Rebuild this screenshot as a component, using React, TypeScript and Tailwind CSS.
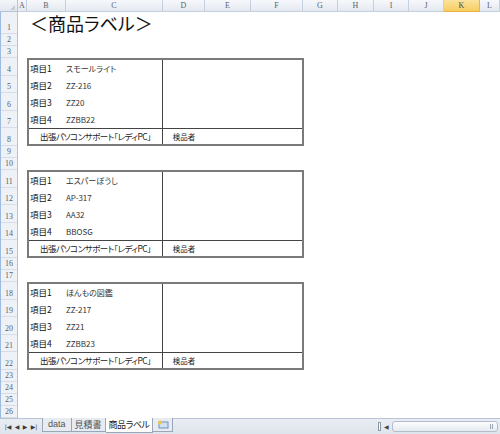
import React from 'react';

// 列ヘッダーの幅 (px)
const columnas: [string, number][] = [
  ['A', 9], ['B', 39], ['C', 97], ['D', 42], ['E', 46], ['F', 52],
  ['G', 35], ['H', 36], ['I', 35], ['J', 35], ['K', 36], ['L', 20],
];

// 行の高さ
const filas: [number, number][] = [
  [1, 22], [2, 12], [3, 12],
  [4, 17.6], [5, 17.6], [6, 17.6], [7, 17.6], [8, 17.6],
  [9, 12], [10, 12],
  [11, 17.6], [12, 17.6], [13, 17.6], [14, 17.6], [15, 17.6],
  [16, 12], [17, 12],
  [18, 17.6], [19, 17.6], [20, 17.6], [21, 17.6], [22, 17.6],
  [23, 12], [24, 12], [25, 12], [26, 12],
];

interface Etiqueta {
  nombre: string;
  codigo: string;
  item3: string;
  item4: string;
}

const etiquetas: Etiqueta[] = [
  { nombre: 'スモールライト', codigo: 'ZZ-216', item3: 'ZZ20', item4: 'ZZBB22' },
  { nombre: 'エスパーぼうし', codigo: 'AP-317', item3: 'AA32', item4: 'BBOSG' },
  { nombre: 'ほんもの図鑑', codigo: 'ZZ-217', item3: 'ZZ21', item4: 'ZZBB23' },
];

const fuente = { fontFamily: '"Noto Sans CJK JP", "Liberation Sans", sans-serif', fontFeatureSettings: '"palt"' };

function Label({ e }: { e: Etiqueta }) {
  const filasItem = [
    ['項目1', e.nombre],
    ['項目2', e.codigo],
    ['項目3', e.item3],
    ['項目4', e.item4],
  ];
  return (
    <div className="ml-[9px] w-[277px] h-[88px] border-2 border-[#7a7a7a] flex flex-col text-[#111] box-border shrink-0">
      <div className="flex h-[68px]">
        <div className="w-[134px] border-r border-[#444] flex flex-col">
          {filasItem.map(([k, v]) => (
            <div key={k} className="h-[17px] flex items-center">
              <span className="w-[37px] pl-[1px] text-[8.5px]">{k}</span>
              <span className="text-[8px] text-[#333]">{v}</span>
            </div>
          ))}
        </div>
        <div className="flex-1" />
      </div>
      <div className="flex border-t border-[#444] h-[16px]">
        <div className="w-[134px] border-r border-[#444] flex items-center justify-center text-[8.5px] tracking-[-0.5px] text-[#222]">出張パソコンサポート「レディPC」</div>
        <div className="w-[42px] flex items-center justify-center text-[7.5px] text-[#222]">検品者</div>
        <div className="flex-1" />
      </div>
    </div>
  );
}

export default function App() {
  return (
    <div className="w-[500px] h-[434px] bg-white flex flex-col overflow-hidden" style={fuente}>
      {/* Cabecera de columnas */}
      <div className="flex h-[12px] shrink-0">
        <div className="w-[18px] shrink-0 bg-gradient-to-b from-[#f4f6f9] to-[#e3e8ef] border-r border-b border-[#b5c3d6] flex items-end justify-end pr-[2px]">
          <div className="w-0 h-0 border-l-[5px] border-l-transparent border-b-[5px] border-b-[#c8ccd2] mb-[1px]" />
        </div>
        {columnas.map(([c, w]) => (
          <div
            key={c}
            style={{ width: w }}
            className={
              c === 'K'
                ? 'shrink-0 bg-gradient-to-b from-[#fbe39b] to-[#f6cd5f] border-r border-b border-[#e7b44a] flex items-center justify-center text-[8px] text-[#4b4b4b] [font-family:"Liberation_Serif",serif]'
                : 'shrink-0 bg-gradient-to-b from-[#f6f8fb] to-[#e4e9f0] border-r border-b border-[#c5d0de] flex items-center justify-center text-[8px] text-[#5a6470] [font-family:"Liberation_Serif",serif]'
            }
          >
            {c}
          </div>
        ))}
      </div>

      <div className="flex flex-1 min-h-0">
        {/* Números de fila */}
        <div className="w-[18px] shrink-0 flex flex-col border-l border-[#9dbbe0] bg-[#eef2f7] border-r border-r-[#b5c3d6]">
          {filas.map(([n, h]) => (
            <div
              key={n}
              style={{ height: h }}
              className="shrink-0 border-b border-[#d6dde7] flex items-end justify-center pb-[1px] text-[8px] leading-[9px] text-[#59626e] [font-family:'Liberation_Serif',serif]"
            >
              {n}
            </div>
          ))}
        </div>

        {/* Hoja */}
        <div className="flex-1 flex flex-col">
          <div className="h-[22px] shrink-0 flex items-end pl-[12px] text-[18px] leading-[21px] text-[#111]">＜商品ラベル＞</div>
          <div className="h-[24px] shrink-0" />
          <Label e={etiquetas[0]} />
          <div className="h-[24px] shrink-0" />
          <Label e={etiquetas[1]} />
          <div className="h-[24px] shrink-0" />
          <Label e={etiquetas[2]} />
        </div>
      </div>

      {/* Barra de pestañas */}
      <div className="h-[16px] shrink-0 flex items-stretch bg-gradient-to-b from-[#e9edf3] to-[#dfe5ec] border-t border-[#b9c5d4] text-[9px]">
        <div className="w-[42px] flex items-center justify-around px-[3px] text-[6px] text-[#3a3a3a] [font-family:'DejaVu_Sans',sans-serif]">
          <span>|◀</span><span>◀</span><span>▶</span><span>▶|</span>
        </div>
        <div className="flex items-start -mt-[1px]">
          <div className="h-[14px] px-[5px] flex items-center bg-[#e8ecf1] border border-t-0 border-[#9aa7b8] text-[#555] [font-family:'Liberation_Sans',sans-serif]">data</div>
          <div className="h-[14px] px-[3px] flex items-center bg-[#e8ecf1] border border-t-0 border-l-0 border-[#9aa7b8] text-[#555]">見積書</div>
          <div className="h-[15px] px-[3px] flex items-center bg-white border border-t-0 border-l-0 border-[#9aa7b8] text-[#222] tracking-[-0.5px]">商品ラベル</div>
          <div className="h-[14px] w-[20px] flex items-center justify-center bg-[#e8ecf1] border border-t-0 border-l-0 border-[#9aa7b8]">
            <svg width="12" height="9" viewBox="0 0 12 9">
              <rect x="2" y="2" width="9" height="6" fill="#cfe0f5" stroke="#6f8fb8" strokeWidth="1" />
              <circle cx="3" cy="2.5" r="2" fill="#f3c64b" />
            </svg>
          </div>
        </div>
        <div className="flex-1" />
        <div className="w-[122px] flex items-center gap-[3px] pr-[2px]">
          <div className="w-[3px] h-[9px] border border-[#8a96a6] bg-white" />
          <span className="text-[6px] text-[#444] [font-family:'DejaVu_Sans',sans-serif]">◀</span>
          <div className="flex-1 h-[11px] rounded-[3px] border border-[#b4becb] bg-gradient-to-b from-[#fbfcfd] to-[#e6ebf1] flex items-center justify-end pr-[4px]">
            <div className="w-[3px] h-[5px] border-x border-[#9aa5b3]" />
          </div>
        </div>
      </div>
    </div>
  );
}
